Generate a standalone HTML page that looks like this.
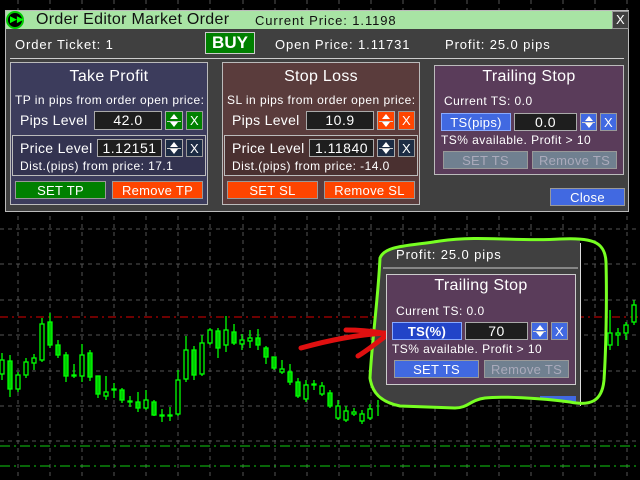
<!DOCTYPE html>
<html><head><meta charset="utf-8"><style>
*{margin:0;padding:0;box-sizing:border-box}
body{width:640px;height:480px;background:#000;position:relative;overflow:hidden;font-family:"Liberation Sans","DejaVu Sans",sans-serif;color:#fff}
.a{position:absolute}
.t{position:absolute;white-space:nowrap;line-height:1}
.s{font-size:12px;letter-spacing:.45px}
.m{font-size:13px;letter-spacing:.9px}
.l{font-size:14px;letter-spacing:.3px}
.h{font-size:16px;letter-spacing:.3px}
.inp{position:absolute;background:#1e1e1e;border:1px solid #aaa;color:#fff;font-size:14px;letter-spacing:.5px;text-align:center;line-height:17px}
.btn{position:absolute;font-size:13px;letter-spacing:.3px;text-align:center;line-height:17px;border:1px solid #999}
.sp{position:absolute;border:1px solid #aaa}
.sp:before{content:"";position:absolute;left:4px;top:2px;border-left:4px solid transparent;border-right:4px solid transparent;border-bottom:5px solid #fff}
.sp:after{content:"";position:absolute;left:4px;bottom:2px;border-left:4px solid transparent;border-right:4px solid transparent;border-top:5px solid #fff}
.sp i{position:absolute;left:1px;right:1px;top:50%;height:1px;background:#ccc}
</style></head><body>
<svg class="a" style="left:0;top:0" width="640" height="480">
<g stroke="#555" stroke-dasharray="4 4" stroke-width="1">
<line x1="18" y1="0" x2="18" y2="480"/><line x1="50" y1="0" x2="50" y2="480"/><line x1="82" y1="0" x2="82" y2="480"/><line x1="114" y1="0" x2="114" y2="480"/><line x1="146" y1="0" x2="146" y2="480"/><line x1="178" y1="0" x2="178" y2="480"/><line x1="210" y1="0" x2="210" y2="480"/><line x1="243" y1="0" x2="243" y2="480"/><line x1="275" y1="0" x2="275" y2="480"/><line x1="307" y1="0" x2="307" y2="480"/><line x1="339" y1="0" x2="339" y2="480"/><line x1="371" y1="0" x2="371" y2="480"/><line x1="403" y1="0" x2="403" y2="480"/><line x1="435" y1="0" x2="435" y2="480"/><line x1="467" y1="0" x2="467" y2="480"/><line x1="499" y1="0" x2="499" y2="480"/><line x1="531" y1="0" x2="531" y2="480"/><line x1="563" y1="0" x2="563" y2="480"/><line x1="595" y1="0" x2="595" y2="480"/><line x1="627" y1="0" x2="627" y2="480"/>
<line x1="0" y1="229" x2="640" y2="229"/><line x1="0" y1="264" x2="640" y2="264"/><line x1="0" y1="300" x2="640" y2="300"/><line x1="0" y1="335" x2="640" y2="335"/><line x1="0" y1="371" x2="640" y2="371"/><line x1="0" y1="406" x2="640" y2="406"/><line x1="0" y1="441" x2="640" y2="441"/>
</g>
<line x1="0" y1="317" x2="640" y2="317" stroke="#d00" stroke-dasharray="8 4 2 4"/>
<line x1="0" y1="446" x2="640" y2="446" stroke="#1c1" stroke-dasharray="10 4 2 4"/>
<line x1="0" y1="466" x2="640" y2="466" stroke="#1c1" stroke-dasharray="10 4 2 4"/>
<g stroke="#0f0" stroke-width="1.3" fill="none">
<path d="M2 353V380M10 355V397M18 372V392M26 358V378M34 354V370M42 318V362M50 313V348M58 340V358M66 352V382M74 364V378M82 344V382M90 350V381M98 376V398M106 376V400M114 383V398M122 388V403M130 396V407M138 392V412M146 390V410M154 400V416M162 409V422M170 407V421M178 370V416M186 336V382M194 346V380M202 335V376M210 328V345M218 328V358M226 316V352M234 324V345M242 334V350M250 330V348M258 329V350M266 346V364M274 360V370M282 360V374M290 364V385M298 378V398M306 380V402M314 380V390M322 382V396M330 390V408M338 400V420M346 406V422M354 408V416M362 410V424M370 404V420M378 400V416M610 310V350M618 328V346M626 322V340M634 300V325"/>
</g>
<g stroke="#0f0" stroke-width="1.3" fill="#000">
<rect x="0" y="360" width="4" height="14"/><rect x="8" y="361" width="4" height="28" fill="#0c0"/><rect x="16" y="375" width="4" height="14"/><rect x="24" y="362" width="4" height="13"/><rect x="32" y="358" width="4" height="5"/><rect x="40" y="324" width="4" height="36"/><rect x="48" y="322" width="4" height="23" fill="#0c0"/><rect x="56" y="345" width="4" height="10" fill="#0c0"/><rect x="64" y="355" width="4" height="21" fill="#0c0"/><rect x="72" y="375" width="4" height="1"/><rect x="80" y="355" width="4" height="21"/><rect x="88" y="353" width="4" height="24" fill="#0c0"/><rect x="96" y="376" width="4" height="18" fill="#0c0"/><rect x="104" y="392" width="4" height="4"/><rect x="112" y="389" width="4" height="1"/><rect x="120" y="390" width="4" height="10" fill="#0c0"/><rect x="128" y="401" width="4" height="1"/><rect x="136" y="402" width="4" height="6" fill="#0c0"/><rect x="144" y="400" width="4" height="8"/><rect x="152" y="402" width="4" height="13" fill="#0c0"/><rect x="160" y="415" width="4" height="1"/><rect x="168" y="415" width="4" height="1"/><rect x="176" y="380" width="4" height="34"/><rect x="184" y="350" width="4" height="29"/><rect x="192" y="350" width="4" height="25" fill="#0c0"/><rect x="200" y="343" width="4" height="31"/><rect x="208" y="330" width="4" height="13"/><rect x="216" y="331" width="4" height="17" fill="#0c0"/><rect x="224" y="330" width="4" height="15"/><rect x="232" y="332" width="4" height="11" fill="#0c0"/><rect x="240" y="340" width="4" height="4"/><rect x="248" y="338" width="4" height="3"/><rect x="256" y="338" width="4" height="7" fill="#0c0"/><rect x="264" y="348" width="4" height="9" fill="#0c0"/><rect x="272" y="357" width="4" height="11" fill="#0c0"/><rect x="280" y="369" width="4" height="3"/><rect x="288" y="372" width="4" height="10" fill="#0c0"/><rect x="296" y="382" width="4" height="14" fill="#0c0"/><rect x="304" y="385" width="4" height="14"/><rect x="312" y="384" width="4" height="1"/><rect x="320" y="386" width="4" height="8"/><rect x="328" y="393" width="4" height="13" fill="#0c0"/><rect x="336" y="406" width="4" height="12"/><rect x="344" y="411" width="4" height="9"/><rect x="352" y="412" width="4" height="2"/><rect x="360" y="414" width="4" height="7"/><rect x="368" y="409" width="4" height="9"/><rect x="608" y="333" width="4" height="12"/><rect x="616" y="333" width="4" height="2"/><rect x="624" y="325" width="4" height="8"/><rect x="632" y="305" width="4" height="17"/>
</g>
<defs><clipPath id="c"><path d="M380 258 C385 245 410 246 440 241 C480 235 520 242 560 239 C590 238 605 240 606 262 C607 300 606 350 604 380 C602 402 590 406 570 402 C540 398 500 396 485 398 C470 400 468 408 455 408 L400 406 C380 402 372 392 370 378 C372 340 378 300 380 258Z"/></clipPath></defs>
<g clip-path="url(#c)">
<rect x="360" y="230" width="220" height="190" fill="#404040"/>
<rect x="540" y="396" width="36" height="14" fill="#4169e1"/>
<line x1="383" y1="268" x2="578" y2="268" stroke="#ccc"/>
</g>
<line x1="580.5" y1="243" x2="580.5" y2="406" stroke="#ddd"/>
<path d="M380 258 C385 245 410 246 440 241 C480 235 520 242 560 239 C590 238 605 240 606 262 C607 300 606 350 604 380 C602 402 590 406 570 402 C540 398 500 396 485 398 C470 400 468 408 455 408 L400 406 C380 402 372 392 370 378 C372 340 378 300 380 258Z" fill="none" stroke="#7f2" stroke-width="3"/>
<path d="M301 348 C330 340 355 335 386 333 M346 330 C365 330 378 332 388 334 C378 342 368 350 358 356" fill="none" stroke="#e01010" stroke-width="5" stroke-linecap="round"/>
</svg>

<!-- zoomed overlay contents -->
<div class="t m" style="left:396px;top:248px">Profit: 25.0 pips</div>
<div class="a" style="left:386px;top:274px;width:190px;height:111px;background:#5a3c5a;border:1px solid #ccc"></div>
<div class="t h" style="left:386px;top:278px;width:190px;text-align:center">Trailing Stop</div>
<div class="t s" style="left:396px;top:305px">Current TS: 0.0</div>
<div class="btn" style="left:392px;top:322px;width:70px;height:18px;background:#2244c8;font-weight:bold;border-color:#8af">TS(%)</div>
<div class="inp" style="left:465px;top:322px;width:63px;height:18px">70</div>
<div class="sp" style="left:531px;top:322px;width:17px;height:18px;background:#4169e1"><i></i></div>
<div class="btn" style="left:551px;top:322px;width:17px;height:18px;background:#4169e1">X</div>
<div class="t s" style="left:392px;top:343px">TS% available. Profit &gt; 10</div>
<div class="btn" style="left:394px;top:360px;width:85px;height:18px;background:#4169e1">SET TS</div>
<div class="btn" style="left:484px;top:360px;width:85px;height:18px;background:#708090;color:#aab">Remove TS</div>

<!-- main dialog -->
<div class="a" style="left:5px;top:10px;width:624px;height:202px;background:#404040;border:1px solid #bbb"></div>
<div class="a" style="left:6px;top:11px;width:606px;height:18px;background:#a8e4a4"></div>
<div class="a" style="left:6px;top:11px;width:18px;height:18px;background:#000;border-radius:9px;border:2px solid #0c0"></div>
<div class="t" style="left:10px;top:15px;font-size:9px;color:#0f0;font-weight:bold">▶▶</div>
<div class="t" style="left:36px;top:12px;font-size:16px;letter-spacing:.3px;color:#111">Order Editor Market Order</div>
<div class="t m" style="left:255px;top:14px;color:#111">Current Price: 1.1198</div>
<div class="btn" style="left:612px;top:11px;width:17px;height:18px;background:#404040;font-size:13px;line-height:16px">X</div>
<div class="t m" style="left:15px;top:38px">Order Ticket: 1</div>
<div class="a" style="left:205px;top:32px;width:50px;height:22px;background:#008000;border:1px solid #ccc;font-weight:bold;font-size:17px;text-align:center;line-height:20px">BUY</div>
<div class="t m" style="left:275px;top:38px">Open Price: 1.11731</div>
<div class="t m" style="left:445px;top:38px">Profit: 25.0 pips</div>
<div class="a" style="left:10px;top:58px;width:614px;height:1px;background:#ccc"></div>

<!-- TP -->
<div class="a" style="left:10px;top:62px;width:198px;height:143px;background:#3c3c5c;border:1px solid #bbb"></div>
<div class="t h" style="left:10px;top:69px;width:198px;text-align:center">Take Profit</div>
<div class="t s" style="left:15px;top:94px">TP in pips from order open price:</div>
<div class="t l" style="left:20px;top:113px">Pips Level</div>
<div class="inp" style="left:94px;top:111px;width:68px;height:19px">42.0</div>
<div class="sp" style="left:165px;top:111px;width:18px;height:19px;background:#008000"><i></i></div>
<div class="btn" style="left:186px;top:111px;width:17px;height:19px;background:#008000">X</div>
<div class="a" style="left:12px;top:135px;width:194px;height:41px;border:1px solid #bbb;background:#333350"></div>
<div class="t l" style="left:20px;top:141px">Price Level</div>
<div class="inp" style="left:97px;top:139px;width:65px;height:18px">1.12151</div>
<div class="sp" style="left:165px;top:139px;width:18px;height:18px;background:#1c2c44"><i></i></div>
<div class="btn" style="left:186px;top:139px;width:17px;height:18px;background:#1c2c44">X</div>
<div class="t s" style="left:20px;top:160px">Dist.(pips) from price: 17.1</div>
<div class="btn" style="left:15px;top:181px;width:91px;height:18px;background:#008000">SET TP</div>
<div class="btn" style="left:112px;top:181px;width:91px;height:18px;background:#ff4500">Remove TP</div>

<!-- SL -->
<div class="a" style="left:222px;top:62px;width:198px;height:143px;background:#5a3c3c;border:1px solid #bbb"></div>
<div class="t h" style="left:222px;top:69px;width:198px;text-align:center">Stop Loss</div>
<div class="t s" style="left:227px;top:94px">SL in pips from order open price:</div>
<div class="t l" style="left:232px;top:113px">Pips Level</div>
<div class="inp" style="left:306px;top:111px;width:68px;height:19px">10.9</div>
<div class="sp" style="left:377px;top:111px;width:18px;height:19px;background:#ff4500"><i></i></div>
<div class="btn" style="left:398px;top:111px;width:17px;height:19px;background:#ff4500">X</div>
<div class="a" style="left:224px;top:135px;width:194px;height:41px;border:1px solid #bbb;background:#4a3030"></div>
<div class="t l" style="left:232px;top:141px">Price Level</div>
<div class="inp" style="left:309px;top:139px;width:65px;height:18px">1.11840</div>
<div class="sp" style="left:377px;top:139px;width:18px;height:18px;background:#1c2c44"><i></i></div>
<div class="btn" style="left:398px;top:139px;width:17px;height:18px;background:#1c2c44">X</div>
<div class="t s" style="left:232px;top:160px">Dist.(pips) from price: -14.0</div>
<div class="btn" style="left:227px;top:181px;width:91px;height:18px;background:#ff4500">SET SL</div>
<div class="btn" style="left:324px;top:181px;width:91px;height:18px;background:#ff4500">Remove SL</div>

<!-- TS -->
<div class="a" style="left:434px;top:65px;width:190px;height:110px;background:#5a3c5a;border:1px solid #bbb"></div>
<div class="t h" style="left:434px;top:69px;width:190px;text-align:center">Trailing Stop</div>
<div class="t s" style="left:444px;top:95px">Current TS: 0.0</div>
<div class="btn" style="left:441px;top:113px;width:70px;height:18px;background:#4169e1;border-color:#8af">TS(pips)</div>
<div class="inp" style="left:514px;top:113px;width:63px;height:18px">0.0</div>
<div class="sp" style="left:580px;top:113px;width:17px;height:18px;background:#4169e1"><i></i></div>
<div class="btn" style="left:600px;top:113px;width:17px;height:18px;background:#4169e1">X</div>
<div class="t s" style="left:441px;top:134px">TS% available. Profit &gt; 10</div>
<div class="btn" style="left:443px;top:151px;width:85px;height:18px;background:#708090;color:#aab">SET TS</div>
<div class="btn" style="left:532px;top:151px;width:85px;height:18px;background:#708090;color:#aab">Remove TS</div>
<div class="btn" style="left:550px;top:188px;width:75px;height:18px;background:#4169e1">Close</div>
</body></html>
